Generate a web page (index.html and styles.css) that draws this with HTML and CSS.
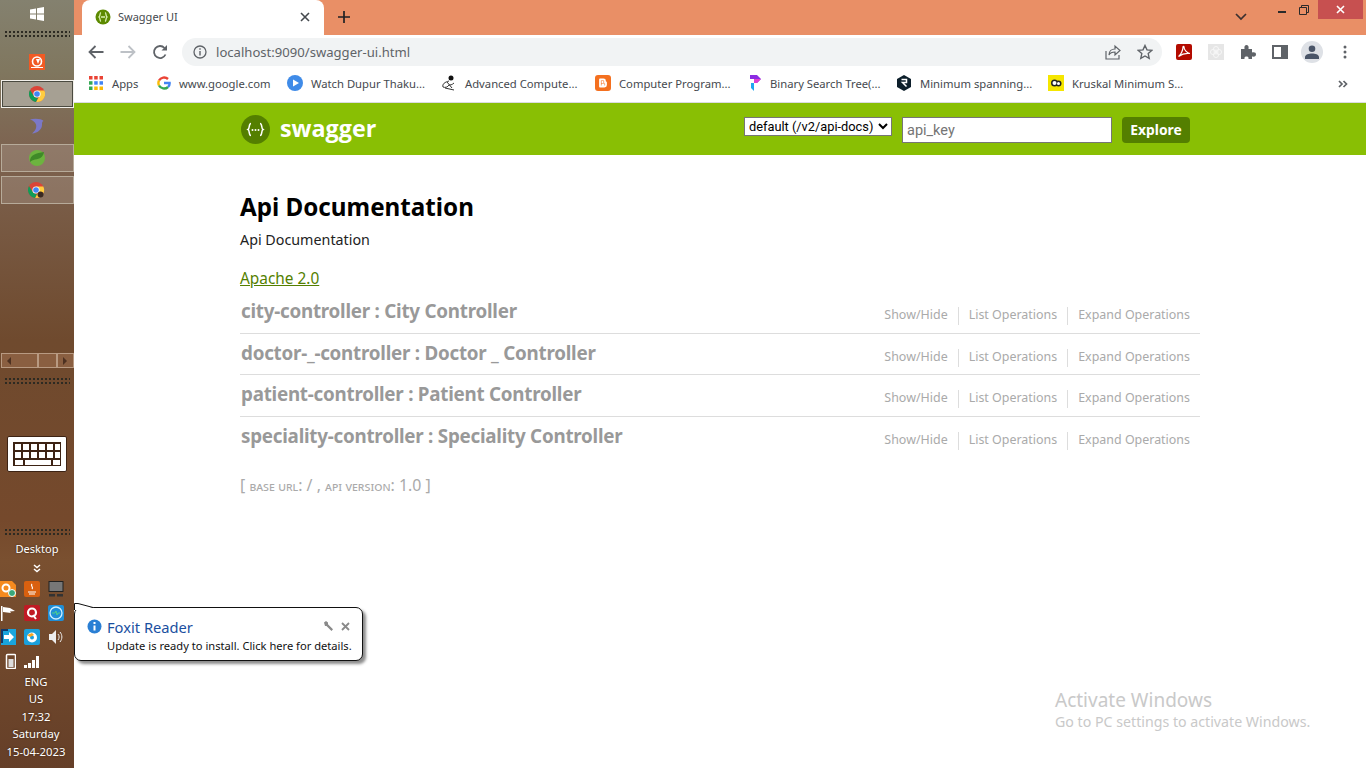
FILE: index.html
```html
<!DOCTYPE html>
<html lang="en">
<head>
<meta charset="utf-8">
<title>Swagger UI</title>
<link rel="stylesheet" href="styles.css">
</head>
<body>
<div class="desktop">
  <aside class="taskbar">
    <svg class="win" width="16" height="14" viewBox="0 0 16 14"><path fill="#fff" d="M1 2.500l6-1v5H1zM8 1.300l7-1.200V6.500H8zM1 7.500h6v5l-6-1zM8 7.500h7v6.400l-7-1.200z"/></svg>
    <div class="grip"></div>
    <div class="tb-apps">
      <div class="tb-app"><svg width="16" height="16" viewBox="0 0 16 16"><rect width="16" height="16" fill="#f15a24"/><circle cx="8" cy="7.500" r="4.500" fill="none" stroke="#fff" stroke-width="1.600"/><path fill="#fff" d="M7 5l4 0-2 5z"/><path fill="#fff" d="M2 13h12v1H2z"/></svg></div>
      <div class="tb-app active"><svg width="16" height="16" viewBox="0 0 16 16"><circle cx="8" cy="8" r="8" fill="#db4437"/><path fill="#ffcd40" d="M8 4.500h7.300A8 8 0 0 1 7 15.900L10.800 9.500z"/><path fill="#0f9d58" d="M1 4l3.800 6A3.500 3.500 0 0 0 9 11.400L7 15.900A8 8 0 0 1 1 4z"/><circle cx="8" cy="8" r="3.600" fill="#fff"/><circle cx="8" cy="8" r="2.800" fill="#4285f4"/></svg></div>
      <div class="tb-app plain"><svg width="14" height="16" viewBox="0 0 14 16"><path fill="#7b78c8" d="M0 1.500C5 0 12 1 13.500 3 12 3.500 12 5 12 7c0 4-4 8-10 8.500C5 13 7 10 6 6.500 5 4 3 2.500 0 1.500z"/></svg></div>
      <div class="tb-app"><svg width="16" height="16" viewBox="0 0 16 16"><circle cx="8" cy="8" r="8" fill="#6db33f"/><path fill="#3f8a28" d="M1 11C1 5 7 3 15 2 14 7 11 9 6 9.500 4 10 2 11 1 12z"/></svg></div>
      <div class="tb-app"><svg width="18" height="16" viewBox="0 0 18 16"><circle cx="8" cy="8" r="8" fill="#db4437"/><path fill="#ffcd40" d="M8 4.500h7.300A8 8 0 0 1 7 15.900L10.800 9.500z"/><path fill="#0f9d58" d="M1 4l3.800 6A3.500 3.500 0 0 0 9 11.400L7 15.900A8 8 0 0 1 1 4z"/><circle cx="8" cy="8" r="3.600" fill="#fff"/><circle cx="8" cy="8" r="2.800" fill="#4285f4"/><circle cx="12.500" cy="12.500" r="3" fill="#3a2a22"/></svg></div>
    </div>
    <div class="tb-scroll">
      <div class="sb-track"><span class="arr-l"></span></div>
      <div class="sb-thumb"></div>
      <div class="sb-end"><span class="arr-r"></span></div>
    </div>
    <div class="grip grip-b"></div>
    <div class="kbd">
      <svg width="50" height="26" viewBox="0 0 50 26"><rect x="1" y="1" width="48" height="24" fill="#3d2314"/><g fill="#fff"><rect x="3" y="3" width="6" height="6"/><rect x="11" y="3" width="6" height="6"/><rect x="19" y="3" width="6" height="6"/><rect x="27" y="3" width="6" height="6"/><rect x="35" y="3" width="6" height="6"/><rect x="43" y="3" width="5" height="6"/><rect x="3" y="11" width="6" height="6"/><rect x="11" y="11" width="6" height="6"/><rect x="19" y="11" width="6" height="6"/><rect x="27" y="11" width="6" height="6"/><rect x="35" y="11" width="6" height="6"/><rect x="43" y="11" width="5" height="6"/><rect x="3" y="19" width="8" height="5"/><rect x="13" y="19" width="26" height="5"/><rect x="41" y="19" width="7" height="5"/></g></svg>
    </div>
    <div class="grip grip-c"></div>
    <div class="tb-desktop">Desktop</div>
    <svg class="chev" width="8" height="9" viewBox="0 0 8 9"><path fill="none" stroke="#fff" stroke-width="1.500" d="M1 1l3 2.500L7 1M1 5l3 2.500L7 5"/></svg>
    <div class="tray">
      <svg width="16" height="16" viewBox="0 0 16 16"><path fill="#f58a1f" d="M0 0h12l4 4v12H0z"/><circle cx="6" cy="7" r="3.500" fill="none" stroke="#fff" stroke-width="2"/><circle cx="12" cy="12" r="3.500" fill="#39a87a" stroke="#fff"/></svg>
      <svg width="16" height="16" viewBox="0 0 16 16"><rect width="16" height="16" rx="2" fill="#d9600f"/><path fill="none" stroke="#fff" stroke-width="1.200" d="M4 11h8M5 13h6M8 3c-2 2 2 3 0 5"/></svg>
      <svg width="16" height="16" viewBox="0 0 16 16"><rect x="1" y="0.500" width="14" height="10" fill="#777" stroke="#222"/><rect x="1" y="13" width="6" height="2.500" fill="#333"/><rect x="9" y="13" width="6" height="2.500" fill="#333"/></svg>
      <svg width="16" height="16" viewBox="0 0 16 16"><path fill="#fff" d="M1 1h1.500v15H1zM3 2l7 1 5 3-5 .500 1 1.500-8-1z"/></svg>
      <svg width="16" height="16" viewBox="0 0 16 16"><rect width="16" height="16" rx="2" fill="#c01a24"/><circle cx="8" cy="7.500" r="4" fill="none" stroke="#fff" stroke-width="2.200"/><path stroke="#fff" stroke-width="2" d="M9 10l3 4"/></svg>
      <svg width="16" height="16" viewBox="0 0 16 16"><rect width="16" height="16" rx="2" fill="#1f8ed6"/><circle cx="8" cy="8" r="6" fill="none" stroke="#cfeeff" stroke-width="1.300"/><path fill="none" stroke="#4fd08a" d="M4 8h3l1-2 1 4 1-2h2"/></svg>
      <svg width="16" height="16" viewBox="0 0 16 16"><rect x="1" width="15" height="16" fill="#1aa5dc"/><path fill="#123a6b" d="M1 0h7v2H3v12H1z"/><path fill="#fff" d="M4 6h5V3l5 5-5 5v-3H4z"/></svg>
      <svg width="16" height="16" viewBox="0 0 16 16"><rect width="16" height="16" rx="2" fill="#1aa0dc"/><circle cx="8" cy="8.500" r="5" fill="#fff"/><circle cx="8" cy="8.500" r="2" fill="#1aa0dc"/><path fill="#f5a623" d="M3 6l5-2 2 2-4 2z"/></svg>
      <svg width="16" height="16" viewBox="0 0 16 16"><path fill="#eee" d="M1 5h3l4-4v14l-4-4H1z"/><path fill="none" stroke="#eee" d="M10 5c1.500 2 1.500 4 0 6M12 3c2.500 3 2.500 7 0 10"/></svg>
      <svg width="16" height="16" viewBox="0 0 16 16"><rect x="6.500" y="1.500" width="9" height="14" rx="1" fill="none" stroke="#fff" stroke-width="1.500"/><rect x="8.500" y="6" width="5" height="8" fill="#ddd"/></svg>
      <svg width="16" height="16" viewBox="0 0 16 16"><path fill="#fff" d="M0 12h3v3H0zM4 10h3v5H4zM8 7h3v8H8zM12 3h3v12h-3z"/></svg>
    </div>
    <div class="clock">
      <div>ENG</div><div>US</div><div>17:32</div><div>Saturday</div><div>15-04-2023</div>
    </div>
  </aside>

  <div class="browser">
    <header class="tabstrip">
      <div class="tab">
        <svg class="fav" width="16" height="16" viewBox="0 0 16 16"><circle cx="8" cy="8" r="7.500" fill="#5c8a00"/><path fill="none" stroke="#d8f0b0" stroke-width="1.300" d="M6 3.500C4.500 4 5.500 7 4 8c1.500 1 .5 4 2 4.500M10 3.500c1.500.5.500 3.500 2 4.500-1.500 1-.5 4-2 4.500M6 8h4"/></svg>
        <span class="tab-title">Swagger UI</span>
        <svg class="tab-x" width="10" height="10" viewBox="0 0 10 10"><path stroke="#45494e" stroke-width="1.600" d="M1 1l8 8M9 1l-8 8"/></svg>
      </div>
      <svg class="newtab" width="14" height="14" viewBox="0 0 14 14"><path stroke="#202124" stroke-width="1.700" d="M7 1v12M1 7h12"/></svg>
      <div class="strip-space"></div>
      <svg class="tab-chev" width="12" height="8" viewBox="0 0 12 8"><path fill="none" stroke="#3c3030" stroke-width="1.700" d="M1 1l5 5 5-5"/></svg>
      <div class="winctl">
        <svg class="ctl-min" width="8" height="2" viewBox="0 0 8 2"><rect width="8" height="2" fill="#2a2a2a"/></svg>
        <svg class="ctl-restore" width="10" height="10" viewBox="0 0 10 10"><path fill="none" stroke="#2a2a2a" d="M.5 2.500h7v7h-7zM2.500 2.500v-2h7v7h-2"/></svg>
        <div class="ctl-close"><svg width="9" height="9" viewBox="0 0 9 9"><path stroke="#fff" stroke-width="1.600" d="M1 1l7 7M8 1L1 8"/></svg></div>
      </div>
    </header>

    <div class="toolbar">
      <svg class="tool-ic first" width="16" height="14" viewBox="0 0 16 14"><path fill="none" stroke="#5f6368" stroke-width="1.800" d="M15.500 7H2M7.500 1L1.500 7l6 6"/></svg>
      <svg class="tool-ic" width="16" height="14" viewBox="0 0 16 14"><path fill="none" stroke="#bdc1c6" stroke-width="1.800" d="M.5 7H14M8.500 1l6 6-6 6"/></svg>
      <svg class="tool-ic" width="16" height="16" viewBox="0 0 16 16"><path fill="none" stroke="#5f6368" stroke-width="1.800" d="M13.500 10.500A6 6 0 1 1 12.500 4"/><path fill="#5f6368" d="M15 1v5.500H9.500z"/></svg>
      <div class="omnibox">
        <svg width="14" height="14" viewBox="0 0 14 14"><circle cx="7" cy="7" r="6" fill="none" stroke="#5f6368" stroke-width="1.300"/><path stroke="#5f6368" stroke-width="1.400" d="M7 6v4.500M7 3.200v1.600"/></svg>
        <span class="url">localhost:9090/swagger-ui.html</span>
        <span class="omni-space"></span>
        <svg width="16" height="16" viewBox="0 0 16 16"><path fill="none" stroke="#5f6368" stroke-width="1.200" d="M1 7v8h13v-4M4 11c0-4 3-6 6-6V2l5 4.500-5 4.500V8c-3 0-5 1-6 3z"/></svg>
        <svg class="star" width="16" height="16" viewBox="0 0 16 16"><path fill="none" stroke="#5f6368" stroke-width="1.400" d="M8 1.500l2 4.400 4.800.5-3.600 3.200 1 4.700L8 12l-4.200 2.300 1-4.700L1.200 6.400 6 5.900z"/></svg>
      </div>
      <svg class="ext ext-first" width="16" height="16" viewBox="0 0 16 16"><rect width="16" height="16" rx="2" fill="#b30b00"/><path fill="none" stroke="#fff" stroke-width="1.200" d="M2.500 12.500C5 11 7 6 7 3c0-1 1-1 1 0 0 3 3 6 6 6.500-3-.5-8 .5-11.500 3z"/></svg>
      <svg class="ext" width="16" height="16" viewBox="0 0 16 16"><rect width="16" height="16" fill="#e6e6e6"/><g fill="none" stroke="#f7f7f7"><circle cx="8" cy="8" r="2"/><circle cx="5" cy="8" r="2.500"/><circle cx="11" cy="8" r="2.500"/><circle cx="8" cy="5" r="2.500"/><circle cx="8" cy="11" r="2.500"/></g></svg>
      <svg class="ext" width="16" height="16" viewBox="0 0 16 16"><path fill="#5f6368" d="M1 5h3.500C4 2 5 1 6.500 1S9 2 8.500 5H12v3.500c3-.5 4 .5 4 2s-1 2.500-4 2V15H8.500c.5-2-1-2.500-2-2.500s-2.500.5-2 2.500H1z"/></svg>
      <svg class="ext" width="16" height="14" viewBox="0 0 16 14"><rect x="1" y="1" width="14" height="12" fill="none" stroke="#5f6368" stroke-width="2"/><rect x="9" y="1" width="6" height="12" fill="#5f6368"/></svg>
      <div class="avatar"><svg width="14" height="14" viewBox="0 0 14 14"><circle cx="7" cy="3.800" r="3.300" fill="#4a5568"/><path fill="#4a5568" d="M0 14v-2c0-2.500 4-3.500 7-3.500s7 1 7 3.500v2z"/></svg></div>
      <svg class="dots" width="4" height="14" viewBox="0 0 4 14"><g fill="#5f6368"><circle cx="2" cy="2" r="1.500"/><circle cx="2" cy="7" r="1.500"/><circle cx="2" cy="12" r="1.500"/></g></svg>
    </div>

    <nav class="bookmarks">
      <div class="bm bm-apps"><svg width="14" height="14" viewBox="0 0 14 14"><rect width="3.500" height="3.500" fill="#ea4335"/><rect x="5.200" width="3.500" height="3.500" fill="#ea4335"/><rect x="10.500" width="3.500" height="3.500" fill="#ea4335"/><rect y="5.200" width="3.500" height="3.500" fill="#34a853"/><rect x="5.200" y="5.200" width="3.500" height="3.500" fill="#4285f4"/><rect x="10.500" y="5.200" width="3.500" height="3.500" fill="#4285f4"/><rect y="10.500" width="3.500" height="3.500" fill="#34a853"/><rect x="5.200" y="10.500" width="3.500" height="3.500" fill="#fbbc05"/><rect x="10.500" y="10.500" width="3.500" height="3.500" fill="#fbbc05"/></svg>Apps</div>
      <div class="bm bm-google"><svg width="14" height="14" viewBox="0 0 14 14"><path fill="none" stroke="#ea4335" stroke-width="2.400" d="M11 3A5.800 5.800 0 0 0 2 4.500"/><path fill="none" stroke="#fbbc05" stroke-width="2.400" d="M2 4.500a5.800 5.800 0 0 0 0 5"/><path fill="none" stroke="#34a853" stroke-width="2.400" d="M2 9.500a5.800 5.800 0 0 0 9 1.500"/><path fill="none" stroke="#4285f4" stroke-width="2.400" d="M11 11c1.200-1 1.700-2.500 1.600-4H7"/></svg>www.google.com</div>
      <div class="bm bm-watch"><svg width="16" height="16" viewBox="0 0 16 16"><circle cx="8" cy="8" r="8" fill="#3f8be8"/><path fill="#fff" d="M6 4.500l6 3.500-6 3.500z"/></svg>Watch Dupur Thaku...</div>
      <div class="bm bm-adv"><svg width="16" height="16" viewBox="0 0 16 16"><circle cx="10" cy="3" r="2.500" fill="#111"/><path fill="none" stroke="#333" d="M8 6C4 7 1 9 2 12c2 1 5 0 6-2 1 0 3 0 5-2M4 13l9 2M6 7l5 6"/></svg>Advanced Compute...</div>
      <div class="bm bm-comp"><svg width="16" height="16" viewBox="0 0 16 16"><rect width="16" height="16" rx="3" fill="#f4701f"/><path fill="none" stroke="#fff" stroke-width="1.800" stroke-linejoin="round" d="M5 11.500V4.500h3.500A1.500 1.500 0 0 1 10 6v1.500h1V10a1.500 1.500 0 0 1-1.500 1.500zM6.500 7h2M6.500 9.500h3"/></svg>Computer Program...</div>
      <div class="bm bm-bin"><svg width="14" height="18" viewBox="0 0 14 18"><path fill="#8b2be2" d="M2 1h7l4 4-4 4H6V5H2z"/><path fill="#e040d0" d="M6 5h3l4 0-4 4H6z"/><path fill="#1fa8f0" d="M3 9h3v8l-3-3z"/></svg>Binary Search Tree(...</div>
      <div class="bm bm-min"><svg width="16" height="16" viewBox="0 0 16 16"><path fill="#0d1f2b" d="M8 0l7 4v8l-7 4-7-4V4z"/><path fill="none" stroke="#fff" stroke-width="1.500" d="M5.500 4.500h5v3h-4l4 4"/></svg>Minimum spanning...</div>
      <div class="bm bm-kr"><svg width="16" height="16" viewBox="0 0 16 16"><rect width="16" height="16" fill="#f5e600"/><circle cx="6.500" cy="8" r="3.500" fill="#222"/><circle cx="10.500" cy="8.500" r="3" fill="#222"/><circle cx="6.500" cy="8" r="2" fill="#fff"/><circle cx="10.500" cy="8.500" r="1.500" fill="#fff"/></svg>Kruskal Minimum S...</div>
      <svg class="bm-more" width="10" height="8" viewBox="0 0 10 8"><path fill="none" stroke="#5f6368" stroke-width="1.700" d="M1 1l3 3-3 3M5.500 1l3 3-3 3"/></svg>
    </nav>

    <main class="page">
      <div class="sw-header">
        <div class="sw-inner">
          <svg class="sw-logo" width="29" height="29" viewBox="0 0 29 29"><circle cx="14.500" cy="14.500" r="14.500" fill="#547f00"/><path fill="none" stroke="#fff" stroke-width="1.500" d="M10 8.500c-2.500 0-1 5-3 6 2 1 .5 6 3 6M19 8.500c2.500 0 1 5 3 6-2 1-.5 6-3 6"/><g fill="#fff"><circle cx="11.500" cy="15" r="1"/><circle cx="14.500" cy="15" r="1"/><circle cx="17.500" cy="15" r="1"/></g></svg>
          <span class="sw-title">swagger</span>
          <span class="sw-space"></span>
          <select class="sw-select"><option>default (/v2/api-docs)</option></select>
          <input class="sw-input" type="text" placeholder="api_key">
          <button class="sw-btn" type="button">Explore</button>
        </div>
      </div>
      <div class="sw-body">
        <h1 class="info-title">Api Documentation</h1>
        <p class="info-desc">Api Documentation</p>
        <a class="info-license" href="#">Apache 2.0</a>
        <ul class="resources">
          <li class="res"><h2>city-controller : City Controller</h2><div class="ops"><span>Show/Hide</span><span>List Operations</span><span>Expand Operations</span></div></li>
          <li class="res"><h2>doctor-_-controller : Doctor _ Controller</h2><div class="ops"><span>Show/Hide</span><span>List Operations</span><span>Expand Operations</span></div></li>
          <li class="res"><h2>patient-controller : Patient Controller</h2><div class="ops"><span>Show/Hide</span><span>List Operations</span><span>Expand Operations</span></div></li>
          <li class="res"><h2>speciality-controller : Speciality Controller</h2><div class="ops"><span>Show/Hide</span><span>List Operations</span><span>Expand Operations</span></div></li>
        </ul>
        <div class="footer-info">[ <span class="sc">base url</span>: / , <span class="sc">api version</span>: 1.0 ]</div>
      </div>
    </main>
  </div>

  <div class="balloon">
    <svg class="b-tail" width="22" height="12" viewBox="0 0 22 12"><path fill="#fff" d="M1 12V1h3L20 5v2H1z"/><path fill="none" stroke="#111" d="M.5 7V.5H4L19 4.500"/></svg>
    <div class="b-head">
      <svg width="15" height="15" viewBox="0 0 15 15"><circle cx="7.500" cy="7.500" r="7" fill="#2a7fd4"/><path stroke="#fff" stroke-width="2" d="M7.500 6.500v5M7.500 3v2"/></svg>
      <span class="b-title">Foxit Reader</span>
      <span class="b-space"></span>
      <svg width="11" height="11" viewBox="0 0 11 11"><path fill="#8a8a8a" d="M1 1.500L3 0l2 1.500v1.800l5 5L8.500 10l-5-5H2z"/></svg>
      <svg class="b-x" width="9" height="9" viewBox="0 0 9 9"><path stroke="#8a8a8a" stroke-width="1.800" d="M1 1l7 7M8 1L1 8"/></svg>
    </div>
    <div class="b-text">Update is ready to install. Click here for details.</div>
  </div>

  <div class="activate">
    <div class="act-1">Activate Windows</div>
    <div class="act-2">Go to PC settings to activate Windows.</div>
  </div>
</div>
</body>
</html>
```

FILE: styles.css
```css
* { box-sizing: border-box; }
html, body { margin: 0; padding: 0; height: 100%; overflow: hidden; background: #fff; }
body { font-family: "Noto Sans", "Open Sans", sans-serif; }
svg { display: block; flex: none; }

.desktop { display: flex; width: 1366px; height: 768px; position: relative; }

/* Taskbar */
.taskbar {
  width: 74px; flex: none; height: 768px;
  display: flex; flex-direction: column; align-items: center;
  background: linear-gradient(180deg, #84816f 0, #80775f 70px, #7d6350 150px, #6f4a2e 340px, #75492c 520px, #7a5030 560px, #653f28 768px);
  color: #fff; font-size: 11.100px;
}
.win { margin-top: 7px; }
.grip {
  width: 66px; height: 8px; margin-top: 9px; flex: none;
  background-image: radial-gradient(circle, #2d2a22 1px, transparent 1.200px);
  background-size: 4px 4px;
}
.grip-b { margin-top: 0; }
.grip-c { margin-top: 56px; }
.tb-apps { display: flex; flex-direction: column; gap: 4px; margin-top: 10px; width: 74px; align-items: center; }
.tb-app {
  width: 73px; height: 28px; display: flex; align-items: center; justify-content: center;
  border: 1px solid #b7ab9a; background: rgba(255,255,255,.14);
}
.tb-app:first-child, .tb-app.plain { border-color: transparent; background: none; }
.tb-app.active { border: 1px solid #f2f0ea; outline: 1px solid #4a4a40; outline-offset: -2px; background: #a6a093; }
.tb-scroll { display: flex; width: 73px; height: 15px; margin-top: 149px; margin-bottom: 9px; }
.sb-track, .sb-thumb, .sb-end {
  border: 1px solid #b89a82; background: #8a5f41; display: flex; align-items: center;
}
.sb-track { width: 37px; padding-left: 5px; }
.sb-thumb { width: 19px; }
.sb-end { width: 17px; justify-content: center; }
.arr-l { border: 4px solid transparent; border-right: 4px solid #4d3121; border-left: 0; }
.arr-r { border: 4px solid transparent; border-left: 4px solid #4d3121; border-right: 0; }
.kbd {
  width: 60px; height: 36px; margin-top: 51px; background: #fff; border-radius: 2px; flex: none;
  border: 1px solid #3d2314; display: flex; align-items: center; justify-content: center;
}
.tb-desktop { margin-top: 4px; line-height: 18px; text-shadow: 0 0 2px #3b2313; }
.chev { margin-top: 6px; }
.tray {
  display: grid; grid-template-columns: repeat(3, 16px); column-gap: 8px; row-gap: 8px;
  margin-top: 8px; align-self: flex-start;
}
.clock { text-align: center; line-height: 17.400px; margin: 4px 2px 0 0; font-size: 11.300px; text-shadow: 0 0 2px #3b2313; }

/* Browser */
.browser { flex: 1; min-width: 0; display: flex; flex-direction: column; }
.tabstrip { height: 35px; background: #e98f66; display: flex; align-items: flex-start; }
.tab {
  width: 242px; height: 35px; margin-left: 8px; padding: 0 14px 2px 13px;
  background: #fff; border-radius: 8px 8px 0 0; display: flex; align-items: center;
}
.tab-title { font-size: 11px; color: #45494e; margin-left: 7px; flex: 1; }
.fav { width: 16px; }
.newtab { margin: 10px 0 0 13px; }
.strip-space { flex: 1; }
.tab-chev { margin: 13px 31px 0 0; }
.winctl { display: flex; align-items: center; height: 19px; }
.ctl-min { margin-right: 13px; margin-top: 5px; }
.ctl-restore { margin-right: 9px; }
.ctl-close {
  width: 45px; height: 19px; background: #c75050; display: flex; align-items: center; justify-content: center;
  margin-right: 3px;
}
.toolbar { height: 35px; background: #fff; display: flex; align-items: center; padding-bottom: 1px; }
.tool-ic { margin-right: 16px; }
.tool-ic.first { margin-left: 14px; }
.omnibox {
  width: 980px; height: 28px; margin-left: -2px; padding: 0 9px 0 11px; border-radius: 14px;
  background: #f1f3f4; display: flex; align-items: center;
}
.url { font-size: 13.100px; color: #5f6368; margin-left: 9px; }
.omni-space { flex: 1; }
.star { margin-left: 16px; }
.ext { margin-left: 16px; }
.ext-first { margin-left: 14px; }
.avatar {
  width: 22px; height: 22px; border-radius: 50%; background: #dee1e6; margin-left: 13px;
  display: flex; align-items: center; justify-content: center;
}
.dots { margin-left: 20px; }

.bookmarks {
  height: 33px; background: #fff; border-bottom: 1px solid #dadce0;
  display: flex; align-items: center; padding-bottom: 6px; position: relative;
}
.bm { display: flex; align-items: center; gap: 8px; font-size: 11.250px; color: #45494e; white-space: nowrap; }
.bm-apps { margin-left: 15px; width: 68px; gap: 9px; }
.bm-google { width: 130px; }
.bm-watch { width: 154px; }
.bm-adv { width: 154px; }
.bm-comp { width: 152px; }
.bm-bin { width: 148px; margin-left: 1px; }
.bm-min { width: 152px; }
.bm-kr { width: 150px; }
.bm-more { position: absolute; right: 18px; top: 10px; }

/* Swagger */
.page { flex: 1; background: #fff; }
.sw-header { height: 52px; background: #89bf04; padding: 0 176px 0 167px; }
.sw-inner { height: 52px; display: flex; align-items: center; }
.sw-title { font-family: "Open Sans", "Noto Sans", sans-serif; font-size: 23.300px; line-height: 30px; font-weight: 700; color: #fff; margin: -3px 0 0 10px; }
.sw-space { flex: 1; }
.sw-select {
  width: 148px; height: 19px; font-family: "Roboto", "Liberation Sans", sans-serif; font-size: 12.800px;
  background: #fff; color: #000; border: 1px solid #767676; border-radius: 0; padding: 0; margin-top: -5px;
}
.sw-input {
  width: 210px; height: 26px; margin: 2px 0 0 10px; padding: 3px 4px; font-size: 14.500px;
  font-family: "Roboto", "Liberation Sans", sans-serif; border: 1px solid #767676; background: #fff;
}
.sw-input::placeholder { color: #757575; }
.sw-btn {
  width: 68px; height: 26px; margin: 2px 0 0 10px; background: #547f00; color: #fff; border: 0; border-radius: 4px;
  font-family: "Noto Sans", sans-serif; font-weight: 700; font-size: 13.800px; padding: 0 0 2px;
}
.sw-body { padding: 0 166px; }
.info-title { margin: 35px 0 0; font-size: 24.200px; line-height: 34px; font-weight: 700; color: #000; }
.info-desc { margin: 6px 0 0; font-size: 14.300px; line-height: 20px; color: #222; }
.info-license { display: block; margin-top: 18px; font-size: 15.400px; line-height: 22px; color: #547f00; text-decoration: underline; width: max-content; }
.resources { list-style: none; margin: 0; padding: 2px 0 0; }
.res {
  height: 41.600px; display: flex; justify-content: space-between; align-items: flex-start;
  border-bottom: 1px solid #ddd; padding-left: 1px;
}
.res:last-child { border-bottom: 0; }
.res h2 { margin: 6px 0 0; font-size: 18.800px; letter-spacing: -.24px; line-height: 27px; font-weight: 700; color: #999; }
.ops { display: flex; padding-top: 15px; padding-right: 10px; }
.ops span { font-size: 12.450px; line-height: 15px; color: #aaa; padding: 0 10px; border-right: 1px solid #ddd; height: 18px; }
.ops span:last-child { border-right: 0; padding-right: 0; }
.footer-info { margin-top: 16px; font-size: 15.900px; line-height: 22px; color: #aaa; font-family: "Noto Sans", sans-serif; }
.sc { font-variant: small-caps; font-size: 13px; }

/* Balloon */
.balloon {
  position: absolute; left: 74px; top: 607px; width: 289px; height: 54px;
  background: #fff; border: 1px solid #111; border-radius: 7px; box-shadow: 3px 3px 3px rgba(0,0,0,.45);
  padding: 7px 12px 0 12px;
}
.b-tail { position: absolute; left: -1px; top: -5px; }
.b-head { display: flex; align-items: center; height: 23px; position: relative; }
.b-title { font-size: 14.700px; color: #1a4fa0; margin-left: 5px; }
.b-space { flex: 1; }
.b-x { margin-left: 7px; }
.b-text { font-size: 11.150px; line-height: 14px; color: #111; margin-left: 20px; margin-top: 1px; white-space: nowrap; }

/* Watermark */
.activate { position: absolute; left: 1055px; top: 688px; color: #c9c9c9; }
.act-1 { font-size: 19px; line-height: 24px; }
.act-2 { font-size: 14.200px; line-height: 20px; }
```
